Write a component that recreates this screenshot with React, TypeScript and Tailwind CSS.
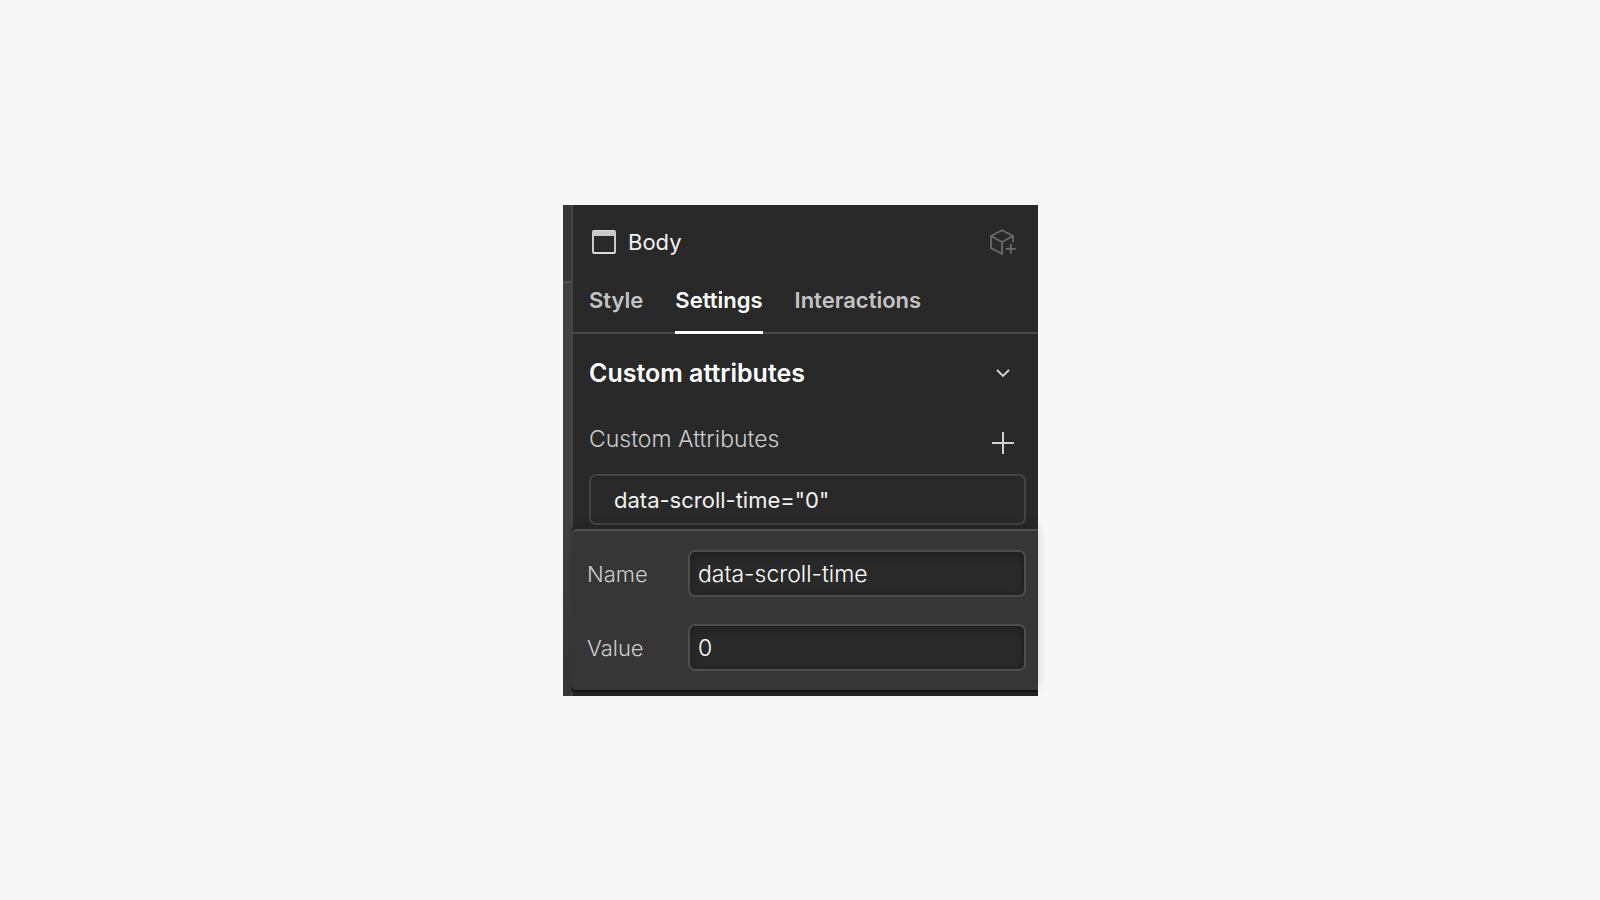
import { useState } from 'react';

const tabs = ['Style', 'Settings', 'Interactions'];

function BodyIcon() {
  return (
    <svg width="24" height="24" viewBox="0 0 24 24" fill="none" aria-hidden="true">
      <rect x="1" y="1" width="22" height="22" rx="1" stroke="#dcdcdc" strokeWidth="1.8" />
      <rect x="1" y="1" width="22" height="5" fill="#c8c8c8" />
    </svg>
  );
}

function CubePlusIcon() {
  return (
    <svg width="26" height="26" viewBox="0 0 26 26" fill="none" stroke="#6b6b6b" strokeWidth="1.8" aria-hidden="true">
      <path d="M23 13V7L12 1.2L1 7V19L12 24.8V13L1 7M12 13L23 7" />
      <path d="M20.8 14.8V24.8M15.8 19.8H25.8" />
    </svg>
  );
}

function ChevronIcon() {
  return (
    <svg width="14" height="10" viewBox="0 0 14 10" fill="none" stroke="#d6d6d6" strokeWidth="1.8" aria-hidden="true">
      <path d="M1 2L7 8L13 2" />
    </svg>
  );
}

function PlusIcon() {
  return (
    <svg width="22" height="22" viewBox="0 0 22 22" fill="none" stroke="#d0d0d0" strokeWidth="2" aria-hidden="true">
      <path d="M11 0V22M0 11H22" />
    </svg>
  );
}

function Field({ id, label, value, onChange }: { id: string; label: string; value: string; onChange: (v: string) => void }) {
  return (
    <div className="flex items-center">
      <label htmlFor={id} className="w-[101px] shrink-0 font-light text-[#cccccc]">{label}</label>
      <input
        id={id}
        value={value}
        onChange={e => onChange(e.target.value)}
        className="h-[47px] min-w-0 flex-1 rounded-[7px] border-2 border-[#4d4d4d] bg-[#292929] px-2 text-[23px] font-light text-white shadow-[inset_0_3px_8px_rgba(0,0,0,0.3)] outline-none"
      />
    </div>
  );
}

export default function App() {
  const [active, setActive] = useState('Settings');
  const [name, setName] = useState('data-scroll-time');
  const [value, setValue] = useState('0');

  return (
    <main className="flex min-h-screen items-center justify-center bg-[#f7f7f7] pt-px pl-px font-['Inter',sans-serif] text-[22px] leading-7">
      <div className="flex w-[475px] max-w-full bg-[#292929]">
        {/* Canvas edge left of the panel */}
        <div className="flex w-2 shrink-0 flex-col bg-[#414141]">
          <div className="h-[78px] border-b-2 border-[#505050] bg-[#363636]" />
          <div className="flex-1" />
          <div className="h-44 bg-linear-to-b from-[#414141] to-[#363636]" />
        </div>

        <div className="flex min-w-0 flex-1 flex-col">
          <section className="border-l-2 border-[#454545] pb-1">
            <header className="flex h-[74px] items-center gap-3 pr-[22px] pl-[19px]">
              <BodyIcon />
              <h1 className="flex-1 text-[#f2f2f2]">Body</h1>
              <button aria-label="Create component">
                <CubePlusIcon />
              </button>
            </header>

            <nav className="flex h-[55px] gap-8 border-b-2 border-[#484848] pl-4">
              {tabs.map(tab => (
                <button
                  key={tab}
                  onClick={() => setActive(tab)}
                  className={
                    tab === active
                      ? '-mb-0.5 border-b-[3px] border-white pt-1.5 pb-4 font-semibold text-white'
                      : '-mb-0.5 border-b-[3px] border-transparent pt-1.5 pb-4 font-semibold text-[#c4c4c4]'
                  }
                >
                  {tab}
                </button>
              ))}
            </nav>

            <div className="flex h-[78px] items-center justify-between pr-7 pl-4">
              <h2 className="text-[25px] font-semibold text-white">Custom attributes</h2>
              <button aria-label="Collapse section">
                <ChevronIcon />
              </button>
            </div>

            <div className="flex h-[62px] items-center justify-between pr-6 pl-4">
              <h3 className="pb-2 text-[23px] font-light text-[#cccccc]">Custom Attributes</h3>
              <button aria-label="Add attribute">
                <PlusIcon />
              </button>
            </div>

            <div className="pr-3 pl-4">
              <button className="block h-[51px] w-full rounded-[7px] border-2 border-[#444444] pl-[23px] text-left text-[#f2f2f2]">
                {name}="{value}"
              </button>
            </div>
          </section>

          {/* Attribute editor */}
          <form className="flex flex-col gap-[27px] rounded-l-md border-t-2 border-b-2 border-t-[#505050] border-b-[#151515] bg-[#363636] pt-[19px] pr-3 pb-[19px] pl-4 shadow-[0_-4px_10px_rgba(0,0,0,0.15)]">
            <Field id="attr-name" label="Name" value={name} onChange={setName} />
            <Field id="attr-value" label="Value" value={value} onChange={setValue} />
          </form>
          <div className="h-1 border-l-2 border-[#3c3c3c] bg-[#222222]" />
        </div>
      </div>
    </main>
  );
}
